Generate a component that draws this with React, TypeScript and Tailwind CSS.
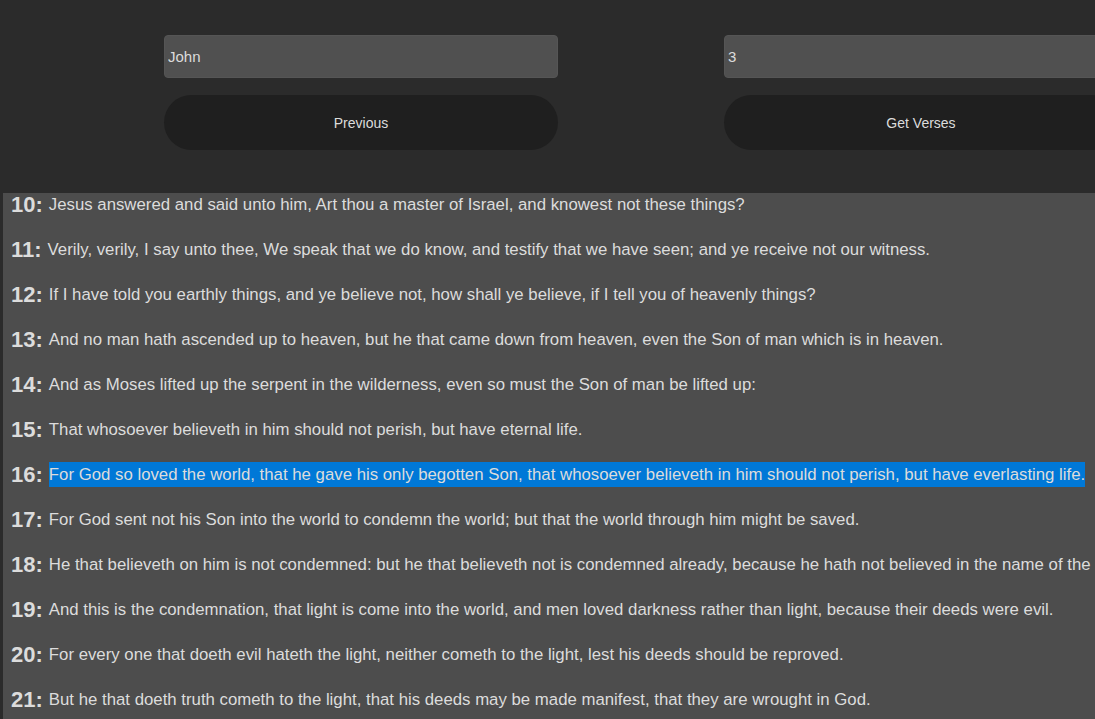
const verses: [number, string][] = [
  [10, "Jesus answered and said unto him, Art thou a master of Israel, and knowest not these things?"],
  [11, "Verily, verily, I say unto thee, We speak that we do know, and testify that we have seen; and ye receive not our witness."],
  [12, "If I have told you earthly things, and ye believe not, how shall ye believe, if I tell you of heavenly things?"],
  [13, "And no man hath ascended up to heaven, but he that came down from heaven, even the Son of man which is in heaven."],
  [14, "And as Moses lifted up the serpent in the wilderness, even so must the Son of man be lifted up:"],
  [15, "That whosoever believeth in him should not perish, but have eternal life."],
  [16, "For God so loved the world, that he gave his only begotten Son, that whosoever believeth in him should not perish, but have everlasting life."],
  [17, "For God sent not his Son into the world to condemn the world; but that the world through him might be saved."],
  [18, "He that believeth on him is not condemned: but he that believeth not is condemned already, because he hath not believed in the name of the only begotten Son of God."],
  [19, "And this is the condemnation, that light is come into the world, and men loved darkness rather than light, because their deeds were evil."],
  [20, "For every one that doeth evil hateth the light, neither cometh to the light, lest his deeds should be reproved."],
  [21, "But he that doeth truth cometh to the light, that his deeds may be made manifest, that they are wrought in God."],
];

export default function App() {
  return (
    <div
      className="flex h-[719px] w-[1095px] flex-col overflow-hidden bg-[#2b2b2b] text-[#dcdcdc]"
      style={{ fontFamily: '"Liberation Sans", Arial, sans-serif' }}
    >
      {/* Header */}
      <div className="flex h-[193px] shrink-0 gap-[166px] overflow-hidden pl-[164px] pt-[35px]">
        <div className="flex w-[394px] shrink-0 flex-col gap-[17px]">
          <input
            defaultValue="John"
            className="h-[43px] w-full rounded-[4px] border border-[#555] bg-[#505050] px-[3px] text-[15px] text-[#dcdcdc] outline-none"
          />
          <button className="h-[55px] w-full rounded-full bg-[#1f1f1f] pt-[2px] text-[14px] text-[#dcdcdc]">
            Previous
          </button>
        </div>
        <div className="flex w-[394px] shrink-0 flex-col gap-[17px]">
          <input
            defaultValue="3"
            className="h-[43px] w-full rounded-[4px] border border-[#555] bg-[#505050] px-[3px] text-[15px] text-[#dcdcdc] outline-none"
          />
          <button className="h-[55px] w-full rounded-full bg-[#1f1f1f] pt-[2px] text-[14px] text-[#dcdcdc]">
            Get Verses
          </button>
        </div>
      </div>

      {/* Verses */}
      <div className="ml-[3px] flex-1 overflow-hidden bg-[#4d4d4d]">
        <div className="-mt-[11px] flex flex-col">
          {verses.map(([n, text]) => (
            <p key={n} className="flex h-[45px] shrink-0 items-center whitespace-nowrap pl-[8px]">
              <span className="mr-[6px] text-[22px] font-bold">{n}:</span>
              <span className={n === 16 ? "bg-[#0078d7] text-[16.8px]" : "text-[16.8px]"}>{text}</span>
            </p>
          ))}
        </div>
      </div>
    </div>
  );
}
